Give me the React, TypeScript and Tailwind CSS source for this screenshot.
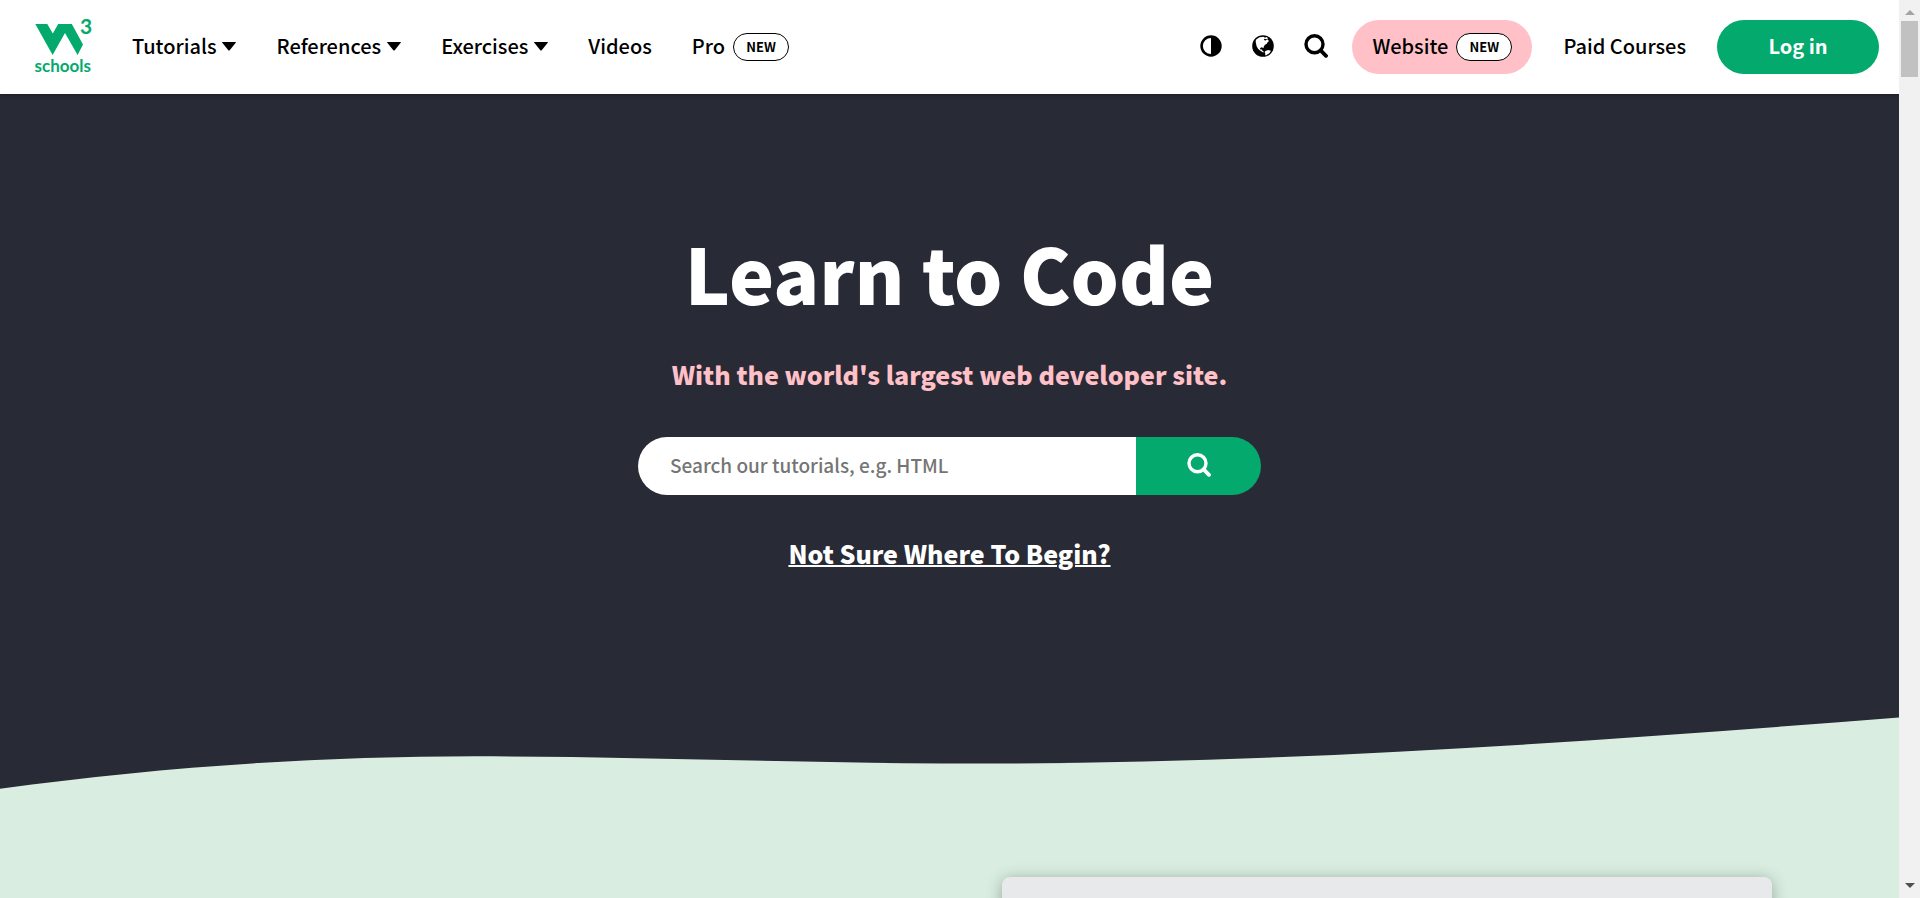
import React from "react";

function Logo() {
  return (
    <svg viewBox="0 0 60 60" className="h-15 w-15 overflow-visible" fill="#04AA6D" role="img" aria-label="W3Schools">
      <path d="M1.3 8H13.3L18.8 17.6L24.2 8H37.8L49 28.4L43.6 39L31 17L18.6 39Z" />
      <text x="46" y="18.3" className="font-['Lato',sans-serif] text-[21px] font-bold">3</text>
      <text x="0.5" y="56" className="font-['Lato',sans-serif] text-[17px] font-bold">schools</text>
    </svg>
  );
}

function Caret() {
  return (
    <svg viewBox="0 0 14 9" className="h-[9px] w-[14px]" fill="currentColor" aria-hidden="true">
      <path d="M.5 0H13.5Q14.2 0 13.7 .7L7.7 8.2Q7 9 6.3 8.2L.3 .7Q-.2 0 .5 0Z" />
    </svg>
  );
}

function SearchIcon() {
  return (
    <svg viewBox="0 0 24 24" className="size-6" fill="none" stroke="currentColor" aria-hidden="true">
      <circle cx="10.5" cy="10.2" r="8.5" strokeWidth="3.4" />
      <path d="M16.6 16.4L22 21.8" strokeWidth="3.8" strokeLinecap="round" />
    </svg>
  );
}

function ContrastIcon() {
  return (
    <svg viewBox="0 0 22 22" className="size-[22px]" aria-hidden="true">
      <circle cx="11" cy="11" r="9.4" fill="none" stroke="currentColor" strokeWidth="2.6" />
      <path d="M11 1A10 10 0 0 1 11 21Z" fill="currentColor" />
    </svg>
  );
}

function GlobeIcon() {
  return (
    <svg viewBox="0 0 22 22" className="size-[22px]" aria-hidden="true">
      <circle cx="11" cy="11" r="10.8" fill="currentColor" />
      <path
        d="M4.4 4.3L7.6 2.3L11.4 1.8L13 2.7L14.6 2.1L16.2 3.2L14.4 4.2L12.4 3.7L11.8 5L13.6 5.4L15.4 4.2L17 6L15.4 7.4L14.8 8.8L13 9.8L11.8 11.6L11.6 13L9.4 12.2L8 13.2L8.4 14.6L10 14.4L10.6 16L12 16.8L11.2 17.4L8.8 15.9L6.2 14L4.6 11.2L4 8.4L3.6 6Z"
        fill="#fff"
      />
      <path d="M13.4 16L16 15L19 15.8L17.4 18.3L14.2 20.2L13 20.2L13.4 18.4L12.6 17.2Z" fill="#fff" />
    </svg>
  );
}

function NewBadge() {
  return (
    <span className="flex h-7 w-14 items-center justify-center rounded-full border border-black bg-white text-[13px] font-bold">
      NEW
    </span>
  );
}

function Nav() {
  return (
    <nav className="relative z-10 flex h-[94px] shrink-0 items-center justify-between bg-white pr-5 pl-[34px] text-[20px] font-medium text-black shadow-[0_2px_4px_rgba(0,0,0,0.25)]">
      <div className="flex items-center gap-10">
        <a href="#home" className="-mr-[2px] pb-0.5">
          <Logo />
        </a>
        {["Tutorials", "References", "Exercises"].map((label) => (
          <button key={label} type="button" className="flex items-center gap-1.5 pb-0.5">
            {label}
            <Caret />
          </button>
        ))}
        <a href="#videos" className="pb-0.5">Videos</a>
        <a href="#pro" className="flex items-center gap-2">
          <span className="pb-0.5">Pro</span>
          <NewBadge />
        </a>
      </div>
      <div className="flex items-center">
        <div className="flex items-center gap-[30px] pr-6 pb-0.5">
          <button type="button" aria-label="Dark mode"><ContrastIcon /></button>
          <button type="button" aria-label="Translate"><GlobeIcon /></button>
          <button type="button" aria-label="Search W3Schools"><SearchIcon /></button>
        </div>
        <a href="#website" className="flex h-[54px] items-center gap-2 rounded-full bg-[#FFC0C7] px-5">
          <span className="pb-0.5">Website</span>
          <NewBadge />
        </a>
        <a href="#courses" className="px-[31px] pb-0.5">Paid Courses</a>
        <a href="#login" className="flex h-[54px] w-[162px] items-center justify-center rounded-full bg-[#04AA6D] pb-0.5 font-bold text-white">
          Log in
        </a>
      </div>
    </nav>
  );
}

function Hero() {
  return (
    <section className="bg-[#282A35]">
      <div className="flex h-[623px] flex-col items-center pt-[118px] text-white">
        <h1 className="text-[76px] leading-[120px] font-black">Learn to Code</h1>
        <h2 className="mt-6 text-[25px] leading-9 font-black text-[#FFC0C7]">
          With the world's largest web developer site.
        </h2>
        <form className="mt-[45px] flex h-[58px] w-[623px] max-w-full">
          <input
            type="text"
            aria-label="Search our tutorials"
            placeholder="Search our tutorials, e.g. HTML"
            className="min-w-0 flex-1 rounded-l-full bg-white px-8 pb-0.5 text-[19px] font-medium text-black placeholder:text-[#757575]"
          />
          <button type="button" aria-label="Search" className="flex w-[125px] items-center justify-center rounded-r-full bg-[#04AA6D] pb-0.5">
            <SearchIcon />
          </button>
        </form>
        <a href="#begin" className="mt-10 text-[25px] leading-9 font-black underline decoration-2">
          Not Sure Where To Begin?
        </a>
      </div>
      <svg viewBox="0 0 1899 72" preserveAspectRatio="none" className="block h-[72px] w-full" aria-hidden="true">
        <path
          d="M0 71.7C158 50 316 39.3 475 39.3C643 39.3 812 46.6 980 46.6C1286 46.6 1593 24.4 1899 .5V72H0Z"
          fill="#D9EEE1"
        />
      </svg>
    </section>
  );
}

function Scrollbar() {
  return (
    <div className="relative z-20 flex w-[21px] shrink-0 flex-col items-center bg-[#F1F1F1]" aria-hidden="true">
      <div className="flex h-[21px] items-center pt-1">
        <svg viewBox="0 0 10 5" className="h-[5px] w-[10px]" fill="#A3A3A3"><path d="M5 0L10 5H0Z" /></svg>
      </div>
      <div className="h-14 w-[17px] bg-[#C1C1C1]" />
      <div className="mt-auto flex h-[21px] items-center pb-1">
        <svg viewBox="0 0 10 5" className="h-[5px] w-[10px]" fill="#505050"><path d="M0 0H10L5 5Z" /></svg>
      </div>
    </div>
  );
}

export default function App() {
  return (
    <div className="flex h-screen overflow-hidden font-['Noto_Sans_CJK_SC',sans-serif]">
      <div className="flex min-w-0 flex-1 flex-col">
        <Nav />
        <main className="min-h-0 flex-1 overflow-hidden bg-[#D9EEE1]">
          <Hero />
          <section className="flex justify-end pt-22 pr-[127px]">
            <div className="h-[420px] w-[770px] rounded-lg bg-[#E7E9EB] shadow-[0_2px_16px_rgba(0,0,0,0.3)]" />
          </section>
        </main>
      </div>
      <Scrollbar />
    </div>
  );
}
